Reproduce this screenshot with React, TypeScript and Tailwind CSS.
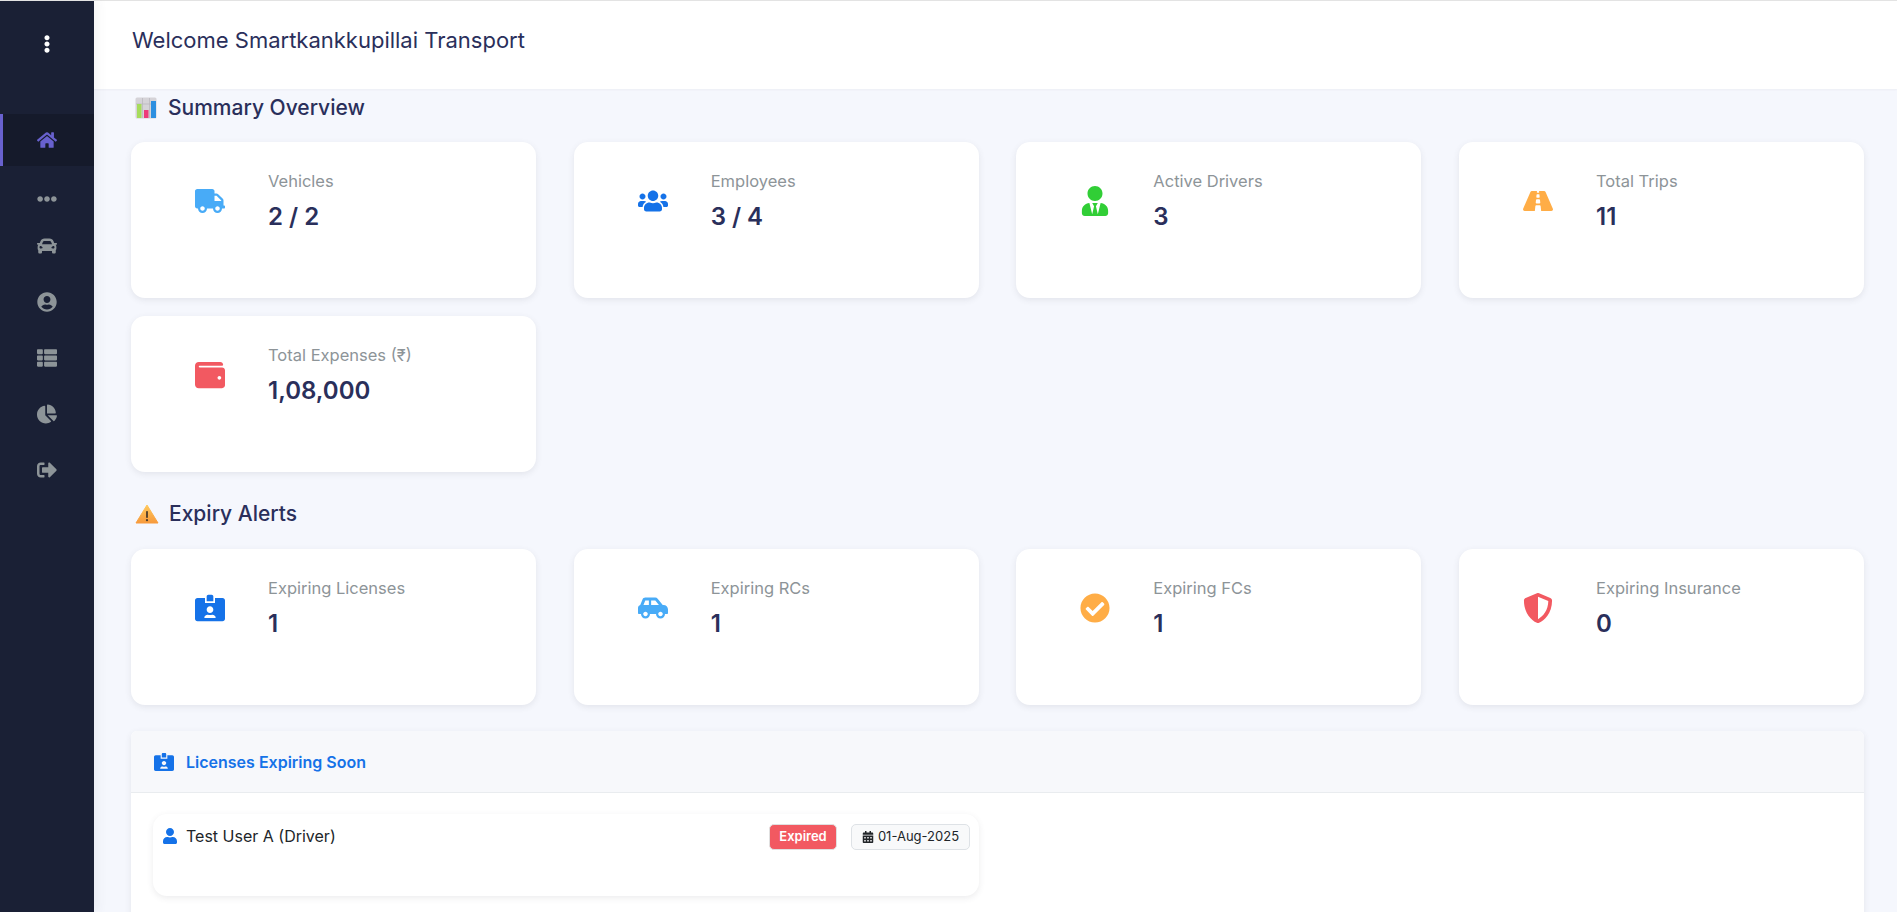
import type { ReactNode } from "react";
import {
  FaCalendarAlt,
  FaCar,
  FaCarSide,
  FaChartPie,
  FaCheckCircle,
  FaEllipsisH,
  FaEllipsisV,
  FaHome,
  FaIdCardAlt,
  FaRoad,
  FaShieldAlt,
  FaSignOutAlt,
  FaThList,
  FaTruck,
  FaUser,
  FaUserCircle,
  FaUserTie,
  FaUsers,
  FaWallet,
} from "react-icons/fa";

function StatCard({ icon, label, value }: { icon: ReactNode; label: string; value: string }) {
  return (
    <div className="flex h-[156px] items-start rounded-[14px] bg-white pt-[27px] shadow-[0_2px_6px_rgba(69,65,78,0.1)]">
      <div className="mt-[14px] ml-[54px] flex h-[36px] w-[50px] items-center justify-center">{icon}</div>
      <div className="ml-[33px]">
        <p className="text-[16.5px] leading-[24px] text-[#8d9498]">{label}</p>
        <p className="mt-[8px] text-[24px] leading-[32px] font-semibold text-[#2a2f5b]">{value}</p>
      </div>
    </div>
  );
}

function ChartEmoji() {
  return (
    <svg viewBox="0 0 22 22" className="h-[22px] w-[22px]">
      <rect x="0.5" y="0.5" width="21" height="21" rx="1.5" fill="#d5d3d8" />
      <path d="M7.5 1v20M14.5 1v20M1 7h20" stroke="#b7b5bb" strokeWidth="0.7" />
      <rect x="2" y="7" width="4.5" height="14" fill="#a6dc5c" />
      <rect x="9" y="13" width="4.5" height="8" fill="#ee3a7a" />
      <rect x="16" y="4" width="5" height="17" fill="#2d8fe0" />
    </svg>
  );
}

function WarningEmoji() {
  return (
    <svg viewBox="0 0 24 20" className="h-[20px] w-[24px]">
      <defs>
        <linearGradient id="warn" x1="0" y1="0" x2="0" y2="1">
          <stop offset="0" stopColor="#ffc95c" />
          <stop offset="1" stopColor="#f79a3c" />
        </linearGradient>
      </defs>
      <path d="M12 1 L23 19 H1 Z" fill="url(#warn)" stroke="url(#warn)" strokeLinejoin="round" />
      <rect x="11.1" y="7" width="1.8" height="7" rx="0.8" fill="#4a3a2a" />
      <circle cx="12" cy="16.2" r="1.1" fill="#4a3a2a" />
    </svg>
  );
}

const navIcons = [
  <FaCar size={20} />,
  <FaUserCircle size={20} />,
  <FaThList size={20} />,
  <FaChartPie size={20} />,
  <FaSignOutAlt size={20} />,
];

export default function App() {
  return (
    <div className="flex h-screen overflow-hidden bg-[#f5f7fd] font-['Inter','Liberation_Sans',sans-serif]">
      <aside className="z-10 flex w-[94px] shrink-0 flex-col items-stretch border-t border-[#e3e3e3] bg-[#1a2035] shadow-[4px_0_10px_rgba(69,65,78,0.06)]">
        <div className="flex h-[88px] items-center justify-center pb-[2px] text-white">
          <FaEllipsisV size={18} />
        </div>
        <div className="mt-[25px] flex h-[52px] items-center justify-center border-l-[3px] border-[#6861ce] bg-[#151a2b] pr-[3px] text-[#6861ce]">
          <FaHome size={20} />
        </div>
        <div className="mt-[23px] flex h-[20px] items-center justify-center text-[#8d9498]">
          <FaEllipsisH size={20} />
        </div>
        <div className="mt-[9px] flex flex-col text-[#8d9498]">
          {navIcons.map((icon, i) => (
            <div key={i} className="flex h-[56px] items-center justify-center">
              {icon}
            </div>
          ))}
        </div>
      </aside>

      <main className="flex min-w-0 flex-1 flex-col">
        <header className="flex h-[89px] shrink-0 items-start border-t border-[#e3e3e3] bg-white pt-[26px] pl-[38px] shadow-[0_1px_2px_rgba(69,65,78,0.05)]">
          <h1 className="text-[22px] leading-[26px] text-[#2a2f5b]">Welcome Smartkankkupillai Transport</h1>
        </header>

        <div className="pr-[33px] pl-[37px]">
          <h2 className="flex h-[38px] items-center gap-[11px] pl-[4px] text-[21px] font-medium text-[#2a2f5b]">
            <ChartEmoji />
            Summary Overview
          </h2>
          <div className="mt-[15px] grid grid-cols-4 gap-x-[37.67px] gap-y-[18px]">
            <StatCard icon={<FaTruck size={30} className="text-[#48abf7]" />} label="Vehicles" value="2 / 2" />
            <StatCard icon={<FaUsers size={30} className="text-[#1572e8]" />} label="Employees" value="3 / 4" />
            <StatCard icon={<FaUserTie size={30} className="text-[#31ce36]" />} label="Active Drivers" value="3" />
            <StatCard icon={<FaRoad size={30} className="text-[#ffad46]" />} label="Total Trips" value="11" />
            <StatCard icon={<FaWallet size={30} className="text-[#f25961]" />} label="Total Expenses (₹)" value="1,08,000" />
          </div>

          <h2 className="mt-[23px] flex h-[38px] items-center gap-[10px] pl-[4px] text-[21px] font-medium text-[#2a2f5b]">
            <WarningEmoji />
            Expiry Alerts
          </h2>
          <div className="mt-[16px] grid grid-cols-4 gap-x-[37.67px]">
            <StatCard icon={<FaIdCardAlt size={30} className="text-[#1572e8]" />} label="Expiring Licenses" value="1" />
            <StatCard icon={<FaCarSide size={30} className="text-[#48abf7]" />} label="Expiring RCs" value="1" />
            <StatCard icon={<FaCheckCircle size={30} className="text-[#ffad46]" />} label="Expiring FCs" value="1" />
            <StatCard icon={<FaShieldAlt size={30} className="text-[#f25961]" />} label="Expiring Insurance" value="0" />
          </div>

          <section className="mt-[26px] rounded-t-[6px] bg-white shadow-[0_2px_6px_rgba(69,65,78,0.1)]">
            <div className="flex h-[62px] items-center gap-[12px] rounded-t-[6px] border-b border-[#e9ecef] bg-[#f7f8fb] pl-[23px] text-[#1572e8]">
              <FaIdCardAlt size={18} className="w-[20px]" />
              <span className="text-[16px] font-semibold">Licenses Expiring Soon</span>
            </div>
            <div className="pt-[21px] pb-[20px] pl-[22px]">
              <div className="flex h-[82px] w-[826px] items-start justify-between rounded-[14px] bg-white px-[9px] pt-[10px] shadow-[0_2px_6px_rgba(69,65,78,0.1)]">
                <div className="flex h-[24px] items-center">
                  <FaUser size={16} className="text-[#1572e8]" />
                  <span className="ml-[8px] text-[16px] text-[#212529]">Test User A (Driver)</span>
                </div>
                <div className="flex items-center gap-[14px]">
                  <span className="flex h-[26px] w-[68px] items-center justify-center rounded-[5px] border border-[#e0e0e0] bg-[#f25961] text-[13px] font-semibold text-white">
                    Expired
                  </span>
                  <span className="flex h-[26px] w-[119px] items-center justify-center gap-[4px] rounded-[5px] border border-[#dee2e6] bg-[#f8f9fa] text-[13px] text-[#212529]">
                    <FaCalendarAlt size={12} />
                    01-Aug-2025
                  </span>
                </div>
              </div>
            </div>
          </section>
        </div>
      </main>
    </div>
  );
}
